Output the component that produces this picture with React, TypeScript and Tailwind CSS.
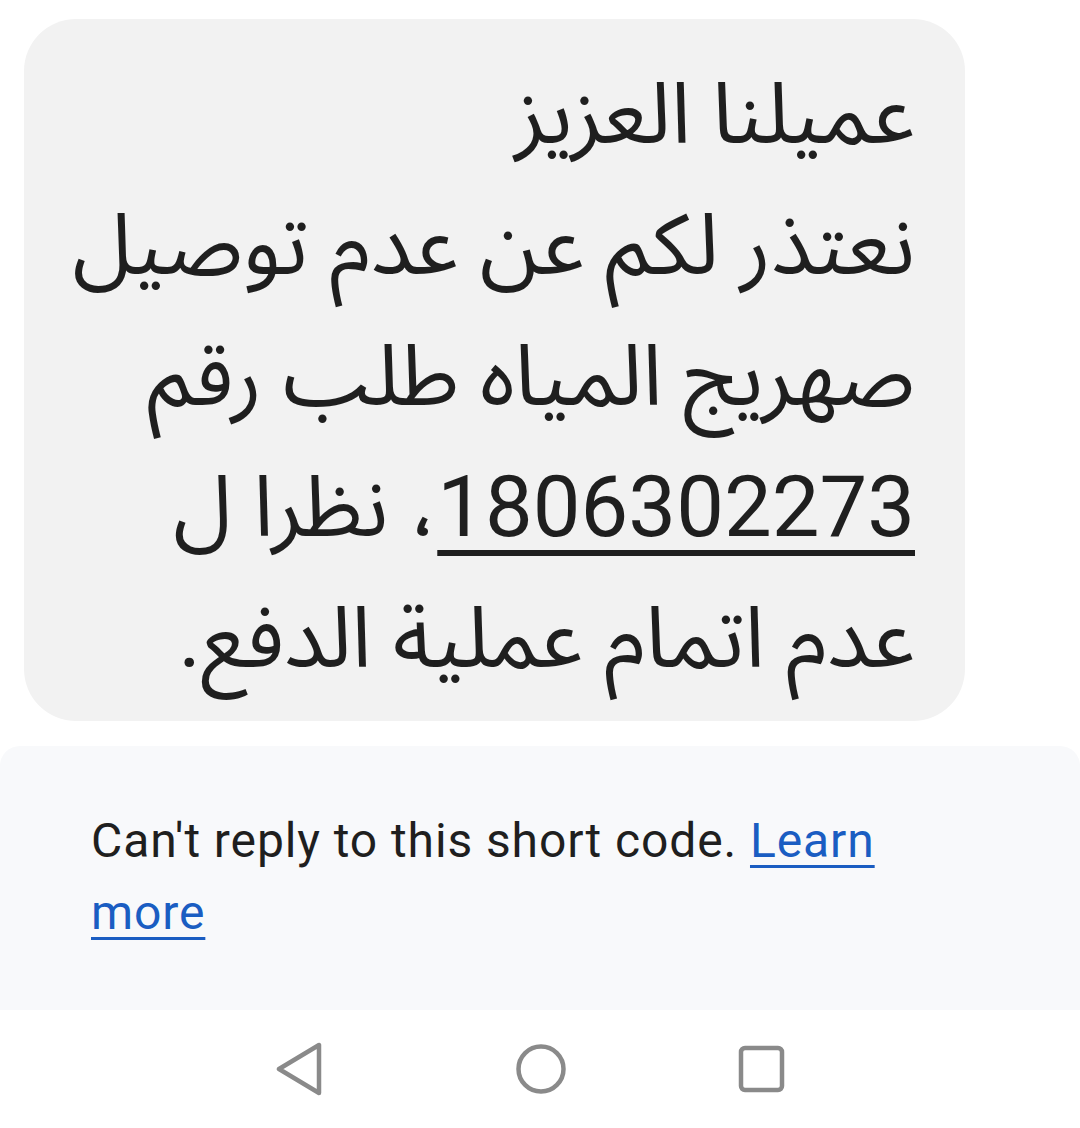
export default function App() {
  const lines = [
    'عميلنا العزيز',
    'نعتذر لكم عن عدم توصيل',
    'صهريج المياه طلب رقم',
  ];

  return (
    <div className="w-[1080px] h-[1128px] bg-white flex flex-col overflow-hidden">
      <div className="pt-[19px] pl-[24px]">
        <div
          dir="rtl"
          className="w-[941px] h-[702px] bg-[#f2f2f2] rounded-[52px] pr-[50px] pt-[30px] text-right text-[#1f1f1f] text-[85px] leading-[131px]"
          style={{ fontFamily: 'Roboto, "Noto Sans Arabic", "DejaVu Sans", sans-serif' }}
        >
          {lines.map((l) => (
            <div key={l} className="whitespace-nowrap">{l}</div>
          ))}
          <div className="whitespace-nowrap">
            <span className="underline decoration-[6px] underline-offset-[14px] tracking-[-0.5px]">1806302273</span>
            ، نظرا ل
          </div>
          <div className="whitespace-nowrap">عدم اتمام عملية الدفع.</div>
        </div>
      </div>

      <div className="mt-[25px] h-[264px] bg-[#f8f9fb] rounded-t-[20px] pl-[91px] pt-[59px]">
        <p
          className="w-[840px] text-[48px] leading-[72px] tracking-[0.9px] text-[#1f1f1f]"
          style={{ fontFamily: 'Roboto, "Open Sans", sans-serif' }}
        >
          Can't reply to this short code.{' '}
          <a className="text-[#1a5dc2] underline decoration-[3px] underline-offset-[8px]">Learn more</a>
        </p>
      </div>

      <div className="flex-1 bg-white flex items-center justify-center">
        <svg width="50" height="54" viewBox="0 0 50 54" className="ml-[-1px]">
          <path
            d="M44 3 L44 51 L4 27 Z"
            fill="none"
            stroke="#8a8a8a"
            strokeWidth="4.5"
            strokeLinejoin="round"
          />
        </svg>
        <svg width="52" height="52" viewBox="0 0 52 52" className="ml-[190px]">
          <circle cx="26" cy="26" r="22.5" fill="none" stroke="#8a8a8a" strokeWidth="4.5" />
        </svg>
        <svg width="48" height="48" viewBox="0 0 48 48" className="ml-[171px] mr-[19px]">
          <rect x="3" y="3" width="41" height="42" rx="4" fill="none" stroke="#8a8a8a" strokeWidth="4.5" />
        </svg>
      </div>
    </div>
  );
}
